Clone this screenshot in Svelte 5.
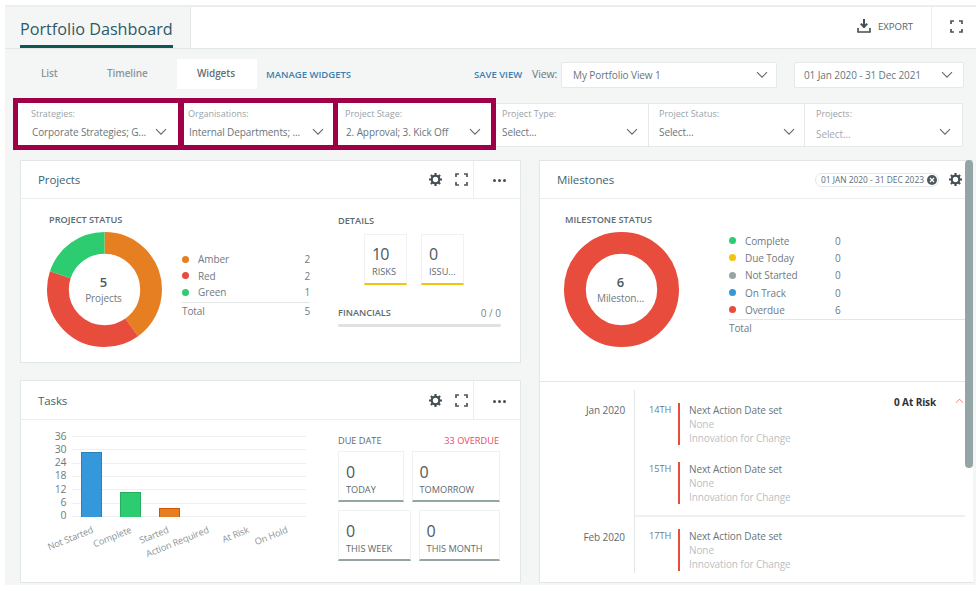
<script>
  const filters = [
    { label: 'Strategies:', value: 'Corporate Strategies; G...', hl: true, w: 170, pl: 13, pr: 11 },
    { label: 'Organisations:', value: 'Internal Departments; ...', hl: true, w: 159, pl: 4, pr: 9 },
    { label: 'Project Stage:', value: '2. Approval; 3. Kick Off', hl: true, w: 163, pl: 7, pr: 10 },
    { label: 'Project Type:', value: 'Select...', w: 153, pl: 6, pr: 10 },
    { label: 'Project Status:', value: 'Select...', w: 156, pl: 10, pr: 9 },
    { label: 'Projects:', value: 'Select...', w: 158, pl: 11, pr: 11, faint: true }
  ];
  const C = 2 * Math.PI * 47;
  const projSlices = [
    { c: '#e67e22', v: 2, off: 0 },
    { c: '#e74c3c', v: 2, off: 2 },
    { c: '#2ecc71', v: 1, off: 4 }
  ];
  const projLegend = [['#e67e22', 'Amber', 2], ['#e74c3c', 'Red', 2], ['#2ecc71', 'Green', 1]];
  const msLegend = [['#2ecc71', 'Complete', 0], ['#f1c40f', 'Due Today', 0], ['#95a5a6', 'Not Started', 0], ['#3498db', 'On Track', 0], ['#e74c3c', 'Overdue', 6]];
  const axis = [36, 30, 24, 18, 12, 6, 0];
  const bars = [
    { c: '#3498db', b: '#2a80b9', h: 65 },
    { c: '#2ecc71', b: '#27ae60', h: 25 },
    { c: '#e67e22', b: '#d35400', h: 9 }
  ];
  const xlabels = [['Not Started', 90], ['Complete', 129], ['Started', 166], ['Action Required', 206], ['At Risk', 246], ['On Hold', 285]];
  const due = [[['0', 'TODAY', 64], ['0', 'TOMORROW', 90]], [['0', 'THIS WEEK', 72], ['0', 'THIS MONTH', 82]]];
  const months = [
    { m: 'Jan 2020', items: ['14TH', '15TH'] },
    { m: 'Feb 2020', items: ['17TH'] }
  ];
</script>

{#snippet chevron()}
  <svg class="chev" viewBox="0 0 12 8" width="12" height="8"><path d="M1 1.2 6 6.2 11 1.2" fill="none" stroke="#5f6b70" stroke-width="1.1"/></svg>
{/snippet}
{#snippet expand()}
  <svg viewBox="0 0 13 13" width="13" height="13"><path d="M1 4V1H4M9 1H12V4M12 9V12H9M4 12H1V9" fill="none" stroke="#4a555b" stroke-width="1.7"/></svg>
{/snippet}
{#snippet gear()}
  <svg viewBox="0 0 24 24" width="13" height="13"><g fill="#434e53"><circle cx="12" cy="12" r="7" fill="none" stroke="#434e53" stroke-width="4"/><path d="M10 0h4v6h-4zM10 18h4v6h-4zM0 10h6v4H0zM18 10h6v4h-6z"/><path d="M10 0h4v6h-4zM10 18h4v6h-4zM0 10h6v4H0zM18 10h6v4h-6z" transform="rotate(45 12 12)"/></g></svg>
{/snippet}
{#snippet cardHead(title, cls)}
  <div class="head {cls}">
    <span class="title">{title}</span>
    <span class="hicons">{@render gear()}{@render expand()}</span>
    <span class="dots"><i></i><i></i><i></i></span>
  </div>
{/snippet}

<div class="page">
  <header class="top">
    <div class="tabzone"><h1>Portfolio Dashboard</h1></div>
    <div class="actions">
      <span class="export">
        <svg viewBox="0 0 14 14" width="14" height="14"><path d="M7 0v7M3.800 4.600 7 8l3.200-3.400" fill="none" stroke="#434e53" stroke-width="2"/><path d="M1 9v4h12V9" fill="none" stroke="#434e53" stroke-width="1.600"/></svg>
        EXPORT
      </span>
      <span class="fs">{@render expand()}</span>
    </div>
  </header>

  <div class="toolbar">
    <span class="tab list">List</span>
    <span class="tab timeline">Timeline</span>
    <span class="tab active">Widgets</span>
    <a class="link manage" href="#m">MANAGE WIDGETS</a>
    <a class="link save" href="#s">SAVE VIEW</a>
    <span class="viewlbl">View:</span>
    <div class="sel view"><span>My Portfolio View 1</span>{@render chevron()}</div>
    <div class="sel date"><span>01 Jan 2020 - 31 Dec 2021</span>{@render chevron()}</div>
  </div>

  <div class="filters">
    {#each filters as f}
      <div class="filter" class:hl={f.hl} class:faint={f.faint} style="width:{f.w}px;padding-left:{f.pl}px;padding-right:{f.pr}px">
        <span class="flabel">{f.label}</span>
        <div class="fval"><span>{f.value}</span>{@render chevron()}</div>
      </div>
    {/each}
  </div>

  <div class="board">
    <div class="leftcol">
      <section class="card">
        {@render cardHead('Projects', 'h38')}
        <div class="pbody">
          <div class="pstatus">
            <div class="subh">PROJECT STATUS</div>
            <div class="prow">
              <div class="donut">
                <svg viewBox="0 0 116 116" width="115" height="115">
                  {#each projSlices as s}
                    <circle cx="58" cy="58" r="47" fill="none" stroke={s.c} stroke-width="22"
                      stroke-dasharray="{(s.v / 5) * C} {C}" stroke-dashoffset={-(s.off / 5) * C}
                      transform="rotate(-90 58 58)" />
                  {/each}
                </svg>
                <div class="dlabel"><b>5</b><span>Projects</span></div>
              </div>
              <div class="legend">
                {#each projLegend as l}
                  <div class="lrow"><i style="background:{l[0]}"></i><span class="ln">{l[1]}</span><span class="lv">{l[2]}</span></div>
                {/each}
                <div class="ltotal"><span>Total</span><span>5</span></div>
              </div>
            </div>
          </div>
          <div class="pdetails">
            <div class="subh">DETAILS</div>
            <div class="stats">
              <div class="stat"><b>10</b><span>RISKS</span></div>
              <div class="stat"><b>0</b><span>ISSU...</span></div>
            </div>
            <div class="fin"><span>FINANCIALS</span><span class="fv">0 / 0</span></div>
            <div class="finbar"></div>
          </div>
        </div>
      </section>

      <section class="card">
        {@render cardHead('Tasks', '')}
        <div class="tbody">
          <div class="chart">
            <div class="yaxis">{#each axis as a}<span>{a}</span>{/each}</div>
            <div class="plot">
              {#each axis as a}<div class="gridline"></div>{/each}
              <div class="bars">
                {#each bars as b}<div class="bar" style="height:{b.h}px;background:{b.c};border-color:{b.b}"></div>{/each}
              </div>
            </div>
            {#each xlabels as x}
              <span class="xl" style="right:{338 - x[1]}px">{x[0]}</span>
            {/each}
          </div>
          <div class="duewrap">
            <div class="duehead"><span>DUE DATE</span><span class="over">33 OVERDUE</span></div>
            {#each due as row}
              <div class="duerow">
                {#each row as d}
                  <div class="duecard" style="flex-grow:{d[2]}"><b>{d[0]}</b><span>{d[1]}</span></div>
                {/each}
              </div>
            {/each}
          </div>
        </div>
      </section>
    </div>

    <section class="card ms">
      <div class="head h38 mshead">
        <span class="title">Milestones</span>
        <span class="chip">01 JAN 2020 - 31 DEC 2023
          <svg viewBox="0 0 10 10" width="10" height="10"><circle cx="5" cy="5" r="5" fill="#4d575c"/><path d="M3 3l4 4M7 3l-4 4" stroke="#fff" stroke-width="1.200"/></svg>
        </span>
        {@render gear()}
      </div>
      <div class="msbody">
        <div class="mstatus">
          <div class="subh">MILESTONE STATUS</div>
          <div class="donut">
            <svg viewBox="0 0 116 116" width="115" height="115"><circle cx="58" cy="58" r="47" fill="none" stroke="#e74c3c" stroke-width="22"/></svg>
            <div class="dlabel"><b>6</b><span>Mileston...</span></div>
          </div>
        </div>
        <div class="mslegend">
          {#each msLegend as l}
            <div class="mrow"><i style="background:{l[0]}"></i><span class="mn">{l[1]}</span><span>{l[2]}</span></div>
          {/each}
          <div class="mtotal">Total</div>
        </div>
      </div>
      <div class="timeline-list">
        <div class="risk"><b>0 At Risk</b>
          <svg viewBox="0 0 10 6" width="9" height="6"><path d="M1 5 5 1l4 4" fill="none" stroke="#ec7063" stroke-width="1"/></svg>
        </div>
        {#each months as mo, mi}
          <div class="month" class:sep={mi > 0}>
            <div class="mname">{mo.m}</div>
            <div class="mitems">
              {#each mo.items as it}
                <div class="item">
                  <span class="day">{it}</span>
                  <div class="itext">
                    <div class="t1">Next Action Date set</div>
                    <div class="t2">None</div>
                    <div class="t2">Innovation for Change</div>
                  </div>
                </div>
              {/each}
            </div>
          </div>
        {/each}
      </div>
      <div class="scrollbar"></div>
    </section>
  </div>
</div>

<style>
  :global(body) { margin: 0; background: #fff; }
  * { box-sizing: border-box; }
  .page {
    position: relative;
    width: 976px; height: 591px; overflow: hidden;
    padding: 5px 0 8px 5px;
    font-family: "Open Sans", "Noto Sans", sans-serif;
    font-size: 10px;
    letter-spacing: -0.1px;
    color: #5e6a70;
  }
  .page > * { background: #f4f6f6; }
  .top {
    display: flex; height: 44px;
    border-top: 2px solid #eceeee; border-bottom: 1px solid #e3e6e6;
  }
  .tabzone { width: 186px; padding-left: 15px; border-right: 1px solid #e3e6e6; }
  h1 {
    margin: 0; display: inline-block; width: 153px; height: 41px;
    padding-top: 10px; white-space: nowrap;
    font-size: 16.200px; font-weight: 400; color: #2d5a66; line-height: 24px; letter-spacing: 0;
    border-bottom: 3px solid #0e5753;
  }
  .actions { flex: 1; background: #fff; display: flex; justify-content: flex-end; align-items: center; height: 41px; }
  .export { display: flex; align-items: center; gap: 7px; font-size: 9.500px; color: #56626a; margin-right: 18px; padding-bottom: 3px; letter-spacing: 0; }
  .fs { width: 45px; height: 100%; border-left: 1px solid #eceeee; display: flex; align-items: center; padding: 0 0 3px 18px; }

  .toolbar { height: 55px; display: flex; align-items: flex-start; padding-top: 10px; }
  .tab { height: 30px; line-height: 28px; font-weight: 600; font-size: 10px; color: #8b9599; }
  .list { margin-left: 36px; width: 66px; }
  .timeline { width: 70px; }
  .active { background: #fff; width: 80px; padding-left: 20px; color: #636e73; }
  .link { color: #3c7fae; font-weight: 600; font-size: 9.500px; letter-spacing: 0; text-decoration: none; margin-top: 9px; white-space: nowrap; }
  .manage { margin-left: 9px; width: 208px; }
  .save { width: 58px; }
  .viewlbl { width: 29px; margin-top: 8px; color: #6a757a; font-size: 10.500px; }
  .sel {
    height: 26px; margin-top: 3px; background: #fff; border: 1px solid #e6e9e9; border-radius: 2px;
    display: flex; align-items: center; justify-content: space-between; color: #6a757a; font-size: 10px;
  }
  .view { width: 216px; padding: 0 8px 0 11px; margin-right: 17px; }
  .date { width: 170px; padding: 0 10px 0 9px; }

  .filters { height: 52px; display: flex; padding: 0 0 0 8px; margin-top: -6px; position: relative; z-index: 1; align-items: flex-start; }
  .filter {
    height: 44px; margin-top: 5px; background: #fff; padding-top: 3px;
    border: 1px solid #e6e9e9; border-left: 0;
    display: flex; flex-direction: column; flex-shrink: 0; position: relative;
  }
  .filter.hl { height: 52px; margin-top: 0; border: 5px solid #a00048; padding-top: 4px; }
  .filter.hl:nth-child(2) { margin-left: -4px; }
  .filter.hl:nth-child(3) { margin-left: -5px; }
  .flabel { font-size: 9px; color: #9aa3a7; line-height: 14px; letter-spacing: 0; }
  .fval { display: flex; justify-content: space-between; align-items: center; height: 14px; margin-top: 4px; color: #6a757a; font-size: 10px; white-space: nowrap; }
  .hl .fval { padding-left: 1px; }
  .faint .fval span { color: #a3abaf; position: relative; top: 2px; }

  .board { height: 435px; display: flex; padding: 10px 0 0 15px; align-items: flex-start; gap: 18px; }
  .leftcol { display: flex; flex-direction: column; gap: 17px; width: 501px; flex-shrink: 0; }
  .card { background: #fff; border: 1px solid #e3e6e6; position: relative; }
  .leftcol .card { height: 203px; }
  .head { height: 39px; border-bottom: 1px solid #eceeee; display: flex; align-items: center; position: relative; }
  .head.h38 { height: 38px; }
  .title { font-size: 11.500px; color: #3b6570; margin-left: 17px; flex: 1; }
  .hicons { display: flex; align-items: center; gap: 13px; margin-right: 5px; }
  .dots { width: 47px; height: 100%; border-left: 1px solid #eceeee; display: flex; align-items: center; justify-content: center; gap: 2px; padding: 2px 0 0 4px; }
  .dots i { width: 3px; height: 3px; border-radius: 50%; background: #444f54; }

  .pbody { display: flex; padding-top: 1px; }
  .pstatus { width: 317px; padding: 13px 0 0 28px; }
  .subh { font-size: 9.200px; font-weight: 600; color: #5e6a70; line-height: 14px; letter-spacing: 0; }
  .prow { display: flex; margin-top: 5px; margin-left: -2px; }
  .donut { position: relative; width: 115px; height: 115px; flex-shrink: 0; }
  .dlabel { position: absolute; inset: 0; display: flex; flex-direction: column; align-items: center; justify-content: center; padding-right: 2px; }
  .dlabel b { font-size: 13px; font-weight: 600; color: #4d5a60; line-height: 17px; }
  .dlabel span { font-size: 10px; color: #6f7a80; line-height: 15px; }
  .legend { width: 128px; margin-left: 20px; margin-top: 19px; }
  .lrow { display: flex; align-items: center; height: 16.500px; color: #6f7a80; font-size: 10px; }
  .lrow i { width: 7px; height: 7px; border-radius: 50%; margin-right: 9px; }
  .ln { flex: 1; }
  .ltotal { display: flex; justify-content: space-between; border-top: 1px solid #e3e6e6; margin-top: 1px; line-height: 16px; color: #6f7a80; font-size: 10px; }
  .pdetails { width: 163px; padding-top: 14px; }
  .stats { display: flex; gap: 14px; margin: 6px 0 0 26px; }
  .stat { width: 43px; height: 51px; border: 1px solid #f0f2f2; border-bottom: 2px solid #f1c40f; padding: 9px 0 0 7px; display: flex; flex-direction: column; }
  .stat b { font-size: 16px; font-weight: 400; color: #4d5a60; line-height: 20px; letter-spacing: -1px; }
  .stat span { font-size: 9.200px; color: #5e6a70; line-height: 15px; white-space: nowrap; letter-spacing: 0; }
  .fin { display: flex; justify-content: space-between; margin-top: 21px; font-size: 9.200px; font-weight: 600; line-height: 14px; letter-spacing: 0; }
  .fv { font-weight: 400; color: #7a858a; font-size: 10px; }
  .finbar { height: 3px; background: #e0e2e2; margin-top: 4px; border-radius: 2px; }

  .tbody { display: flex; }
  .chart { position: relative; width: 317px; height: 160px; padding: 16px 0 0 51px; }
  .yaxis { position: absolute; left: 29.500px; top: 9.500px; width: 16px; height: 93px; display: flex; flex-direction: column; justify-content: space-between; align-items: flex-end; font-size: 10.500px; line-height: 13px; color: #6f7a80; }
  .plot { position: relative; height: 81px; width: 234px; display: flex; flex-direction: column; justify-content: space-between; }
  .gridline { height: 1px; background: #eef0f0; }
  .bars { position: absolute; left: 9px; bottom: 0; display: flex; align-items: flex-end; gap: 18px; }
  .bar { width: 21px; border: 1px solid; border-bottom-width: 0; }
  .xl {
    position: absolute; top: 103px; font-size: 9.200px; color: #8a9499; white-space: nowrap;
    transform: rotate(-22deg); transform-origin: right top;
  }
  .duewrap { width: 163px; padding: 14px 1px 0 0; }
  .duehead { display: flex; justify-content: space-between; font-size: 9.200px; line-height: 14px; letter-spacing: 0; padding-right: 1px; }
  .over { color: #e84a5f; }
  .duerow { display: flex; gap: 8px; margin-top: 3px; }
  .duerow + .duerow { margin-top: 8px; }
  .duecard { flex: 1 1 0; height: 51px; border: 1px solid #f0f2f2; border-bottom: 2px solid #95a5a6; padding: 10px 0 0 7px; display: flex; flex-direction: column; }
  .duecard b { font-size: 16px; font-weight: 400; color: #4d5a60; line-height: 21px; }
  .duecard span { font-size: 9.200px; color: #5e6a70; line-height: 14px; white-space: nowrap; letter-spacing: 0; }

  .ms { width: 434px; height: 423px; border-right: 0; padding-right: 8px; flex-shrink: 0; }
  .mshead { padding-right: 3px; gap: 10px; }
  .chip { display: flex; align-items: center; gap: 3px; height: 14px; border: 1px solid #e3e6e6; border-radius: 8px; padding: 0 1px 0 5px; font-size: 8.400px; color: #5e6a70; white-space: nowrap; letter-spacing: 0; }
  .msbody { display: flex; height: 183px; border-bottom: 1px solid #e3e6e6; padding-top: 1px; }
  .mstatus { width: 189px; padding: 13px 0 0 25px; }
  .mstatus .donut { margin: 5px 0 0 -1px; }
  .mslegend { flex: 1; padding-top: 32px; }
  .mrow { display: flex; align-items: center; height: 17.300px; color: #6f7a80; font-size: 10px; }
  .mrow i { width: 7px; height: 7px; border-radius: 50%; margin-right: 9px; }
  .mn { width: 90px; }
  .mtotal { border-top: 1px solid #e3e6e6; margin-top: 1px; line-height: 17px; color: #6f7a80; font-size: 10px; }

  .timeline-list { position: relative; padding-top: 8px; }
  .risk { position: absolute; top: 13px; left: 354px; display: flex; gap: 19px; align-items: center; color: #2e3436; font-size: 10px; white-space: nowrap; }
  .risk b { font-weight: 700; }
  .risk svg { margin-top: -2px; }
  .month { display: flex; }
  .mname { width: 94px; text-align: right; padding: 13px 9px 0 0; color: #5e6a70; font-size: 10px; line-height: 15px; }
  .mitems { flex: 1; border-left: 1px solid #e3e6e6; padding-top: 13px; }
  .month.sep .mitems { border-top: 2px solid #eef0f0; padding-top: 12px; }
  .month.sep .mname { padding-top: 15px; }
  .item { display: flex; height: 42px; margin-bottom: 17px; }
  .item:last-child { margin-bottom: 11px; }
  .month.sep .item { margin-bottom: 2px; }
  .day { width: 43px; padding: 0 0 0 14px; font-size: 9.200px; color: #6f7a80; line-height: 14px; letter-spacing: 0; }
  .itext { border-left: 2px solid #e74c3c; padding-left: 9px; font-size: 10px; line-height: 14px; }
  .t1 { color: #6a757a; }
  .t2 { color: #b9bfc2; }
  .scrollbar { position: absolute; right: 0; top: -1px; width: 8px; height: 308px; background: #95a5a6; border-radius: 4px; }
</style>
